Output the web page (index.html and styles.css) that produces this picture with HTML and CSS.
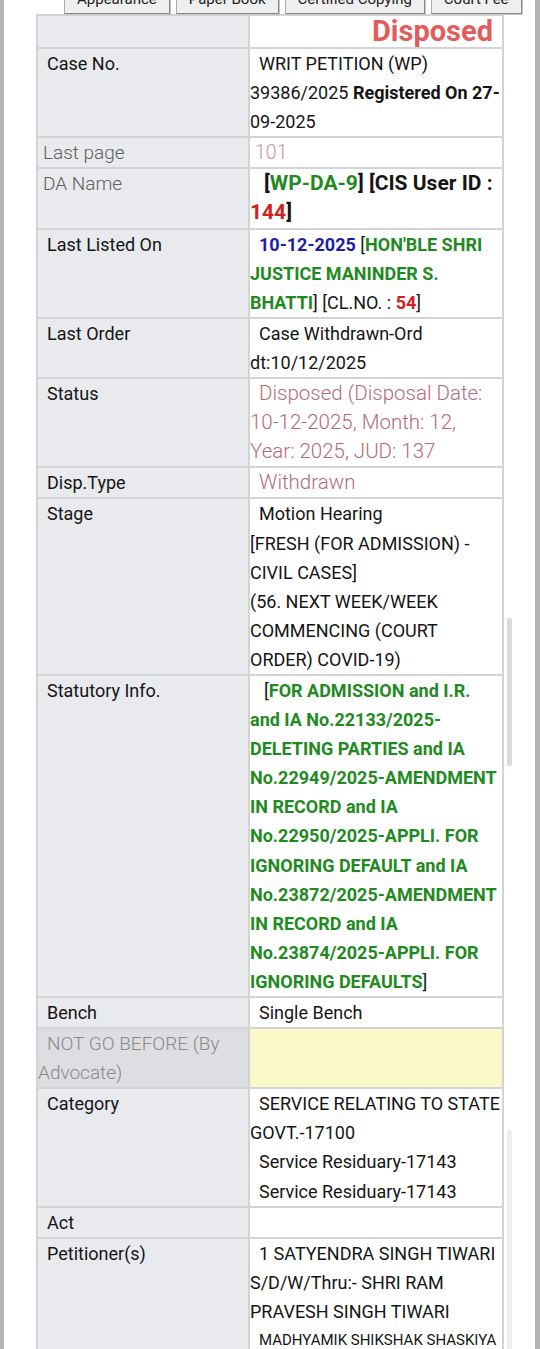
FILE: index.html
```html
<!DOCTYPE html>
<html lang="en">
<head>
<meta charset="utf-8">
<title>Case Status</title>
<link rel="stylesheet" href="styles.css">
</head>
<body>
<div class="screen">
  <div class="tabs">
    <button class="tab">Appearance</button>
    <button class="tab">Paper Book</button>
    <button class="tab">Certified Copying</button>
    <button class="tab">Court Fee</button>
  </div>
  <table class="case">
    <colgroup><col class="c-label"><col class="c-value"></colgroup>
    <tr class="head-row"><td class="lbl"></td><td class="val status-head">Disposed</td></tr>
    <tr><td class="lbl">Case No.</td><td class="val">WRIT PETITION (WP)<br>39386/2025 <b>Registered On 27-</b><br>09-2025</td></tr>
    <tr><td class="lbl light">Last page</td><td class="val pink small-indent">101</td></tr>
    <tr><td class="lbl light">DA Name</td><td class="val da"><b>[<span class="green">WP-DA-9</span>] [CIS User ID :</b><br><b><span class="red">144</span>]</b></td></tr>
    <tr><td class="lbl">Last Listed On</td><td class="val"><b class="blue">10-12-2025</b> [<b class="green">HON'BLE SHRI</b><br><b class="green">JUSTICE MANINDER S.</b><br><b class="green">BHATTI</b>] [CL.NO. : <b class="red">54</b>]</td></tr>
    <tr><td class="lbl">Last Order</td><td class="val">Case Withdrawn-Ord<br>dt:10/12/2025</td></tr>
    <tr><td class="lbl">Status</td><td class="val pink-light">Disposed (Disposal Date:<br>10-12-2025, Month: 12,<br>Year: 2025, JUD: 137</td></tr>
    <tr><td class="lbl">Disp.Type</td><td class="val pink-light">Withdrawn</td></tr>
    <tr><td class="lbl">Stage</td><td class="val">Motion Hearing<br>[FRESH (FOR ADMISSION) -<br>CIVIL CASES]<br>(56. NEXT WEEK/WEEK<br>COMMENCING (COURT<br>ORDER) COVID-19)</td></tr>
    <tr><td class="lbl">Statutory Info.</td><td class="val wide-indent">[<b class="green">FOR ADMISSION and I.R.<br>and IA No.22133/2025-<br>DELETING PARTIES and IA<br>No.22949/2025-AMENDMENT<br>IN RECORD and IA<br>No.22950/2025-APPLI. FOR<br>IGNORING DEFAULT and IA<br>No.23872/2025-AMENDMENT<br>IN RECORD and IA<br>No.23874/2025-APPLI. FOR<br>IGNORING DEFAULTS</b>]</td></tr>
    <tr><td class="lbl">Bench</td><td class="val">Single Bench</td></tr>
    <tr class="ngb-row"><td class="lbl ngb">NOT GO BEFORE (By<br>Advocate)</td><td class="val ngb-val"></td></tr>
    <tr><td class="lbl">Category</td><td class="val"><div>SERVICE RELATING TO STATE<br>GOVT.-17100</div><div>Service Residuary-17143</div><div>Service Residuary-17143</div></td></tr>
    <tr><td class="lbl">Act</td><td class="val"></td></tr>
    <tr><td class="lbl">Petitioner(s)</td><td class="val"><div>1 SATYENDRA SINGH TIWARI<br>S/D/W/Thru:- SHRI RAM<br>PRAVESH SINGH TIWARI</div><div class="addr">MADHYAMIK SHIKSHAK SHASKIYA</div></td></tr>
  </table>
  <div class="scroll s1"></div>
  <div class="scroll s2"></div>
</div>
</body>
</html>
```
FILE: styles.css
```css
html, body {
  margin: 0;
  padding: 0;
  background: #fff;
}
body {
  font-family: Roboto, "Noto Sans", "Liberation Sans", sans-serif;
  font-size: 18px;
  color: #151515;
}
.screen {
  position: relative;
  width: 540px;
  height: 1349px;
  box-sizing: border-box;
  border-left: 4px solid #b4b4b4;
  border-right: 5px solid #b4b4b4;
  overflow: hidden;
}
.tabs {
  display: flex;
  gap: 6px;
  height: 30px;
  margin: -16px 0 0 60px;
}
.tab {
  flex: none;
  height: 30px;
  padding: 0 12px;
  font: 15px Roboto, "Noto Sans", sans-serif;
  color: #222;
  background: #efefef;
  border: 1px solid #ababab;
  border-right-color: #8a8a8a;
  border-bottom-color: #8a8a8a;
  box-shadow: 1px 1px 0 #c4c4c4;
  white-space: nowrap;
}
.case {
  margin-left: 32px;
  border-collapse: collapse;
  table-layout: fixed;
  width: 466px;
}
.c-label { width: 212px; }
.c-value { width: 254px; }
.case td {
  border: 2px solid #d2d3d5;
  padding: 0;
  vertical-align: top;
  line-height: 29.1px;
  white-space: nowrap;
}
.lbl {
  background: #e8eaed;
  text-indent: 9px;
}
.val {
  background: #fff;
  text-indent: 9px;
}
.lbl.light {
  font-size: 19px;
  font-weight: 300;
  color: #5e5e5e;
  text-indent: 5px;
}
.status-head {
  height: 31px;
  line-height: 30px !important;
  text-align: right;
  padding-right: 9px !important;
  font-size: 29px;
  font-weight: 700;
  color: #e35c5c;
}
.small-indent { text-indent: 5px; }
.wide-indent { text-indent: 14px; }
.da {
  font-size: 21px;
  text-indent: 14px;
}
.pink { color: #c2959d; font-weight: 300; font-size: 19.5px; }
.pink-light { color: #b56a7c; font-weight: 300; font-size: 20.5px; }
.green { color: #1f8a1f; }
.red { color: #d52020; }
.blue { color: #1d1da8; }
b { font-weight: 700; }
.ngb {
  background: #dcdee1;
  color: #8a8a8a;
  font-weight: 300;
  font-size: 19px;
}
.ngb-val { background: #fbf9c9; }
.addr {
  font-size: 15px;
}
.scroll {
  position: absolute;
  left: 503px;
  width: 5px;
  border-radius: 2px;
}
.s1 { top: 618px; height: 148px; background: #dadada; }
.s2 { top: 1130px; height: 230px; background: #ececec; }
```
